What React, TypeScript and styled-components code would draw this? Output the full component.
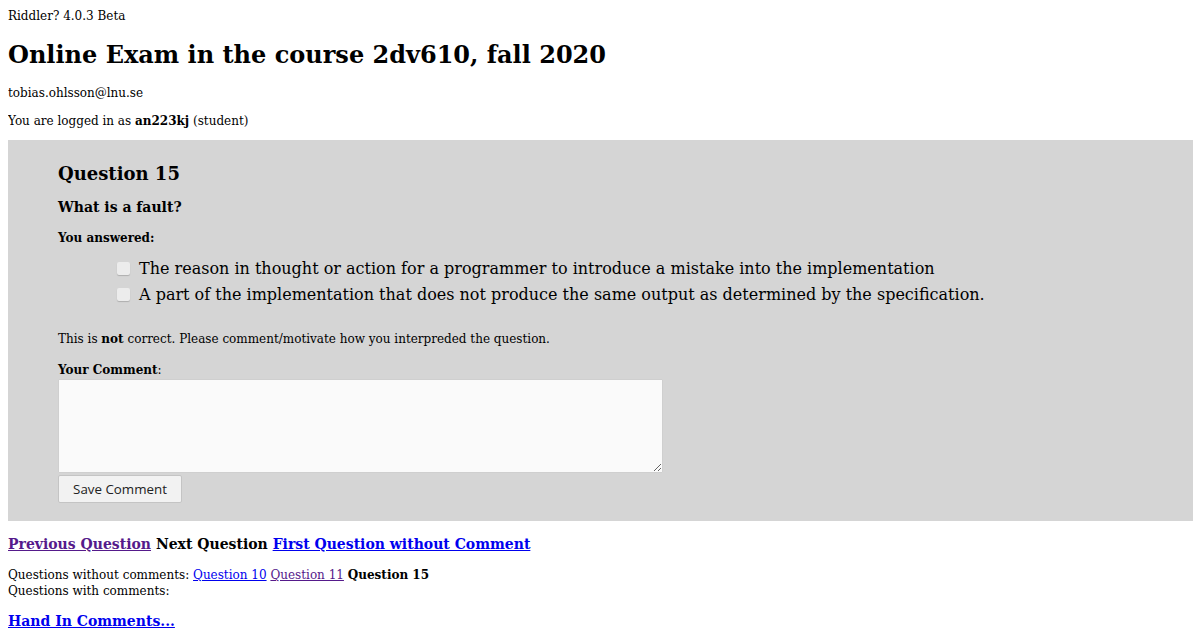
import React from "react";
import styled, { createGlobalStyle } from "styled-components";

const Global = createGlobalStyle`
  body {
    margin: 8px;
    font-family: "DejaVu Serif", serif;
    font-size: 12px;
    line-height: 14px;
    color: #000;
    background: #fff;
  }
`;

const Version = styled.div`
  line-height: 14px;
  padding-top: 1px;
`;

const Title = styled.h1`
  font-size: 24px;
  font-weight: bold;
  margin: 18px 0 17px;
  line-height: 28px;
`;

const Para = styled.p<{ $gap?: number }>`
  margin: 0 0 ${(p) => p.$gap ?? 0}px;
  line-height: 14px;
`;

const Panel = styled.div`
  background: #d5d5d5;
  padding: 23px 50px 18px;
  margin-top: 12px;
`;

const QTitle = styled.h2`
  font-size: 18px;
  margin: 0 0 14px;
  line-height: 22px;
`;

const QText = styled.h3`
  font-size: 14px;
  margin: 0 0 15px;
  line-height: 17px;
`;

const Label = styled.div`
  font-weight: bold;
  line-height: 14px;
  margin-bottom: 14px;
`;

const Options = styled.div`
  padding-left: 59px;
  display: flex;
  flex-direction: column;
  gap: 7px;
  margin-bottom: 28px;
`;

const Option = styled.label`
  display: flex;
  align-items: center;
  gap: 9px;
  font-size: 16px;
  line-height: 19px;
`;

const Box = styled.span`
  width: 13px;
  height: 13px;
  border-radius: 2px;
  background: #ececec;
  box-shadow: 0 1px 1px rgba(0, 0, 0, 0.18);
  flex: none;
`;

const CommentLabel = styled.div`
  line-height: 14px;
  margin: 17px 0 2px;
`;

const TextArea = styled.textarea`
  display: block;
  width: 605px;
  height: 94px;
  box-sizing: border-box;
  background: #fafafa;
  border: 1px solid #cfcfcf;
  border-radius: 1px;
  margin: 0 0 2px;
  font-family: "Open Sans", sans-serif;
`;

const Button = styled.button`
  display: block;
  font-family: "Open Sans", sans-serif;
  font-size: 13.33px;
  color: #222;
  background: #f2f2f2;
  border: 1px solid #c4c4c4;
  border-radius: 2px;
  padding: 0;
  height: 28px;
  width: 124px;
`;

const Nav = styled.div`
  font-size: 14px;
  font-weight: bold;
  margin: 15px 0 14px;
  line-height: 17px;
`;

const Link = styled.a<{ $visited?: boolean }>`
  color: ${(p) => (p.$visited ? "#551a8b" : "#0000ee")};
  text-decoration: underline;
  cursor: pointer;
`;

const Lists = styled.div`
  line-height: 16px;
`;

const HandIn = styled.div`
  font-size: 14px;
  font-weight: bold;
  margin-top: 14px;
  line-height: 17px;
`;

export default function App() {
  return (
    <>
      <Global />
      <Version>Riddler? 4.0.3 Beta</Version>
      <Title>Online Exam in the course 2dv610, fall 2020</Title>
      <Para $gap={14}>tobias.ohlsson@lnu.se</Para>
      <Para>
        You are logged in as <b>an223kj</b> (student)
      </Para>
      <Panel>
        <QTitle>Question 15</QTitle>
        <QText>What is a fault?</QText>
        <Label>You answered:</Label>
        <Options>
          <Option>
            <Box />
            The reason in thought or action for a programmer to introduce a mistake into the implementation
          </Option>
          <Option>
            <Box />
            A part of the implementation that does not produce the same output as determined by the specification.
          </Option>
        </Options>
        <Para>
          This is <b>not</b> correct. Please comment/motivate how you interpreded the question.
        </Para>
        <CommentLabel>
          <b>Your Comment</b>:
        </CommentLabel>
        <TextArea />
        <Button>Save Comment</Button>
      </Panel>
      <Nav>
        <Link $visited>Previous Question</Link> Next Question{" "}
        <Link>First Question without Comment</Link>
      </Nav>
      <Lists>
        Questions without comments: <Link>Question 10</Link>{" "}
        <Link $visited>Question 11</Link> <b>Question 15</b>
        <br />
        Questions with comments:
      </Lists>
      <HandIn>
        <Link>Hand In Comments...</Link>
      </HandIn>
    </>
  );
}
